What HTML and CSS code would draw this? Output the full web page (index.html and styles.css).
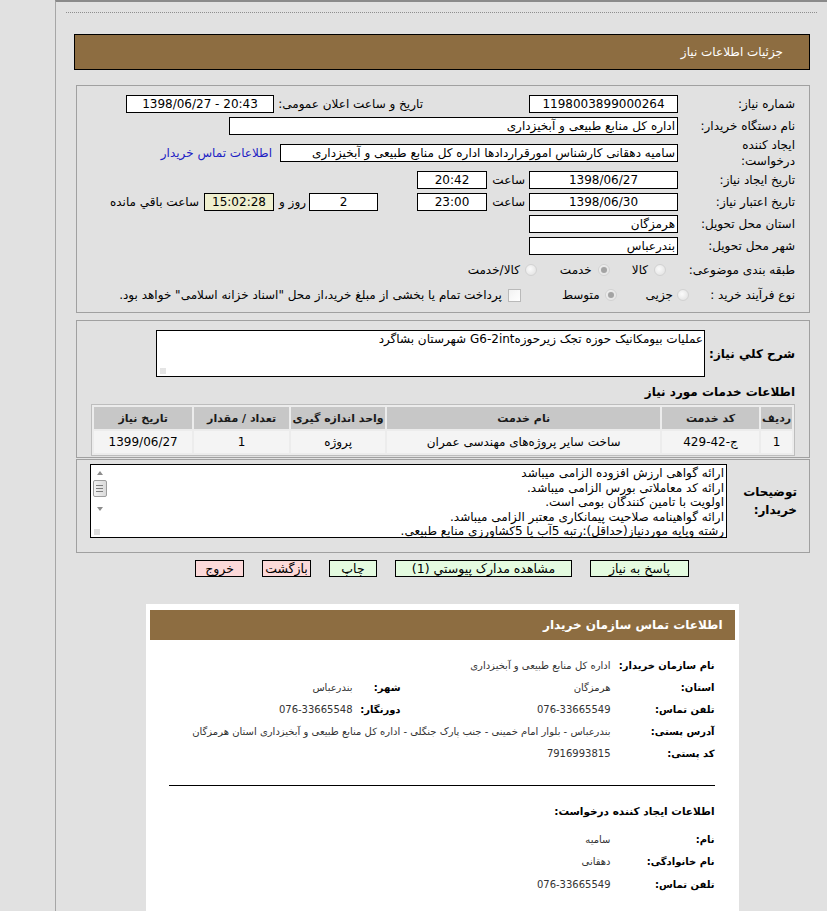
FILE: index.html
```html
<!DOCTYPE html>
<html lang="fa" dir="rtl">
<head>
<meta charset="utf-8">
<title>جزئیات اطلاعات نیاز</title>
<link rel="stylesheet" href="styles.css">
</head>
<body>
<div class="frame">
  <div class="dots"></div>
  <div class="content">
    <div class="title-bar">جزئیات اطلاعات نیاز</div>

    <div class="box form-box">
      <div class="row r1">
        <div class="lbl">شماره نیاز:</div>
        <div class="fld w149 c">1198003899000264</div>
        <div class="txt t-pub">تاریخ و ساعت اعلان عمومی:</div>
        <div class="fld w148 c m5 ltr">1398/06/27 - 20:43</div>
      </div>
      <div class="row">
        <div class="lbl">نام دستگاه خریدار:</div>
        <div class="fld w449">اداره کل منابع طبیعی و آبخیزداری</div>
      </div>
      <div class="row r3">
        <div class="lbl two">ایجاد کننده<br>درخواست:</div>
        <div class="fld w398">سامیه دهقانی کارشناس امورقراردادها اداره کل منابع طبیعی و آبخیزداری</div>
        <a class="link" href="#">اطلاعات تماس خریدار</a>
      </div>
      <div class="row">
        <div class="lbl">تاریخ ایجاد نیاز:</div>
        <div class="fld w149 c">1398/06/27</div>
        <div class="txt t-hr">ساعت</div>
        <div class="fld w70 c m5">20:42</div>
      </div>
      <div class="row">
        <div class="lbl">تاریخ اعتبار نیاز:</div>
        <div class="fld w149 c">1398/06/30</div>
        <div class="txt t-hr">ساعت</div>
        <div class="fld w70 c m5">23:00</div>
        <div class="fld w69 c m39">2</div>
        <div class="txt t-day">روز و</div>
        <div class="fld w70 c m4 remain">15:02:28</div>
        <div class="txt t-rem">ساعت باقي مانده</div>
      </div>
      <div class="row">
        <div class="lbl">استان محل تحویل:</div>
        <div class="fld w149">هرمزگان</div>
      </div>
      <div class="row">
        <div class="lbl">شهر محل تحویل:</div>
        <div class="fld w149">بندرعباس</div>
      </div>
      <div class="row r8">
        <div class="lbl">طبقه بندی موضوعی:</div>
        <span class="radio m12"></span>
        <span class="opt m6">کالا</span>
        <span class="radio on m22"></span>
        <span class="opt m6">خدمت</span>
        <span class="radio m23"></span>
        <span class="opt m5">کالا/خدمت</span>
      </div>
      <div class="row r9">
        <div class="lbl l106">نوع فرآیند خرید :</div>
        <span class="radio"></span>
        <span class="opt m4">جزیی</span>
        <span class="radio on m29"></span>
        <span class="opt m5">متوسط</span>
        <span class="check m41"></span>
        <span class="opt m6">پرداخت تمام یا بخشی از مبلغ خرید،از محل "اسناد خزانه اسلامی" خواهد بود.</span>
      </div>
    </div>

    <div class="box desc-box">
      <div class="desc-row">
        <div class="blbl">شرح کلي نیاز:</div>
        <div class="ta ta1">عملیات بیومکانیک حوزه تجک زیرحوزهG6-2int شهرستان بشاگرد<span class="grip"></span></div>
      </div>
      <div class="sub-h">اطلاعات خدمات مورد نیاز</div>
      <table class="svc">
        <thead>
          <tr>
            <th class="c1">ردیف</th>
            <th class="c2">کد خدمت</th>
            <th class="c3">نام خدمت</th>
            <th class="c4">واحد اندازه گیری</th>
            <th class="c5">تعداد / مقدار</th>
            <th class="c6">تاریخ نیاز</th>
          </tr>
        </thead>
        <tbody>
          <tr>
            <td>1</td>
            <td>ج-42-429</td>
            <td>ساخت سایر پروژه‌های مهندسی عمران</td>
            <td>پروژه</td>
            <td>1</td>
            <td>1399/06/27</td>
          </tr>
        </tbody>
      </table>
    </div>

    <div class="box note-box">
      <div class="blbl note-lbl">توضیحات<br>خریدار:</div>
      <div class="ta ta2">
        <div class="ta-text">
          <div>ارائه گواهی ارزش افزوده الزامی میباشد</div>
          <div>ارائه کد معاملاتی بورس الزامی میباشد.</div>
          <div>اولویت با تامین کنندگان بومی است.</div>
          <div>ارائه گواهینامه صلاحیت پیمانکاری معتبر الزامی میباشد.</div>
          <div>رشته وپایه موردنیاز(حداقل):رتبه 5آب یا 5کشاورزی منابع طبیعی.</div>
        </div>
        <div class="sbar">
          <span class="arr up"></span>
          <span class="thumb"><i></i><i></i><i></i></span>
          <span class="arr down"></span>
          <span class="grip2"></span>
        </div>
      </div>
    </div>

    <div class="buttons">
      <span class="btn green b1">پاسخ به نیاز</span>
      <span class="btn green b2">مشاهده مدارک پیوستي (1)</span>
      <span class="btn green b3">چاپ</span>
      <span class="btn pink b4">بازگشت</span>
      <span class="btn pink b5">خروج</span>
    </div>

    <div class="card">
      <div class="card-h">اطلاعات تماس سازمان خریدار</div>
      <div class="cgrid first">
        <div class="cl">نام سازمان خریدار:</div>
        <div class="cv span">اداره کل منابع طبیعی و آبخیزداری</div>
        <div class="cl">استان:</div>
        <div class="cv">هرمزگان</div>
        <div class="cl">شهر:</div>
        <div class="cv">بندرعباس</div>
        <div class="cl">تلفن تماس:</div>
        <div class="cv">076-33665549</div>
        <div class="cl">دورنگار:</div>
        <div class="cv">076-33665548</div>
        <div class="cl">آدرس پستی:</div>
        <div class="cv span">بندرعباس - بلوار امام خمینی - جنب پارک جنگلی - اداره کل منابع طبیعی و آبخیزداری استان هرمزگان</div>
        <div class="cl">کد پستی:</div>
        <div class="cv span">7916993815</div>
      </div>
      <hr class="sep">
      <div class="card-sub">اطلاعات ایجاد کننده درخواست:</div>
      <div class="cgrid second">
        <div class="cl">نام:</div>
        <div class="cv span">سامیه</div>
        <div class="cl">نام خانوادگی:</div>
        <div class="cv span">دهقانی</div>
        <div class="cl">تلفن تماس:</div>
        <div class="cv span">076-33665549</div>
      </div>
    </div>
  </div>
</div>
</body>
</html>
```
FILE: styles.css
```css
* { box-sizing: border-box; }
html, body { margin: 0; padding: 0; }
body {
  background: #e1e1e1;
  font-family: "DejaVu Sans", sans-serif;
  font-size: 12px;
  color: #000;
}
.frame {
  margin-left: 55px;
  border-left: 1px solid #a6a6a6;
  border-top: 2px solid #8a8a8a;
  min-height: 911px;
  overflow: hidden;
}
.dots {
  margin: 10px 10px 0 10px;
  border-top: 1px dotted #8e8e8e;
}
.content {
  padding: 0 17px 0 18px;
}
.title-bar {
  margin-top: 21px;
  height: 36px;
  border: 1px solid #000;
  background: #8d6d41;
  color: #fff;
  font-size: 12px;
  line-height: 34px;
  padding-right: 26px;
}
.box {
  border: 1px solid #a0a0a0;
  margin-left: 2px;
}
.form-box {
  margin-top: 15px;
  padding: 7px 14px 5px 8px;
}
.row {
  display: flex;
  align-items: center;
  height: 22px;
  white-space: nowrap;
}
.r3 { height: 32px; }
.r8 { height: 26px; }
.r9 { height: 24px; }
.lbl {
  width: 117px;
  flex: none;
  font-size: 12px;
}
.lbl.l106 { width: 106px; }
.lbl.two { line-height: 16px; }
.fld {
  flex: none;
  height: 18px;
  border: 1px solid #000;
  background: #fff;
  line-height: 16px;
  padding: 0 2px;
  overflow: hidden;
  white-space: nowrap;
}
.fld.c { text-align: center; }
.fld.ltr { direction: ltr; }
.w149 { width: 149px; }
.w148 { width: 148px; }
.w449 { width: 449px; }
.w398 { width: 398px; }
.w70 { width: 70px; }
.w69 { width: 69px; }
.m4 { margin-right: 4px; }
.m5 { margin-right: 5px; }
.m6 { margin-right: 6px; }
.m12 { margin-right: 12px; }
.m22 { margin-right: 22px; }
.m23 { margin-right: 23px; }
.m29 { margin-right: 29px; }
.m39 { margin-right: 39px; }
.m41 { margin-right: 41px; }
.remain { background: #efefcf; }
.txt { flex: none; white-space: nowrap; }
.t-pub { width: 144px; margin-right: 106px; }
.t-hr { width: 33px; margin-right: 4px; }
.t-day { width: 28px; margin-right: 3px; }
.t-rem { margin-right: 5px; }
.link {
  margin-right: 8px;
  color: #2121c4;
  text-decoration: none;
}
.radio {
  flex: none;
  position: relative;
  width: 12px;
  height: 12px;
  border-radius: 50%;
  border: 1px solid #d2d2d2;
  background: radial-gradient(circle at 40% 40%, #fbfbfb, #dedede);
}
.radio.on::after {
  content: "";
  position: absolute;
  left: 2px;
  top: 2px;
  width: 6px;
  height: 6px;
  border-radius: 50%;
  background: #a3a3a3;
  box-shadow: 0 0 0 1px #e6e6e6;
}
.check {
  flex: none;
  width: 13px;
  height: 13px;
  border: 1px solid #b9b9b9;
  background: linear-gradient(135deg, #f2f2f2, #ffffff);
}
.opt { flex: none; white-space: nowrap; }

/* description box */
.desc-box {
  margin-top: 7px;
  padding: 9px 14px 1px 14px;
}
.desc-row {
  display: flex;
  align-items: center;
}
.blbl {
  font-weight: bold;
  font-size: 12px;
  flex: none;
}
.desc-row .blbl { width: 90px; }
.ta {
  position: relative;
  border: 1px solid #000;
  background: #fff;
}
.ta1 {
  width: 549px;
  height: 47px;
  padding: 0 1px;
  line-height: 16px;
}
.grip {
  position: absolute;
  left: 3px;
  bottom: 2px;
  width: 6px;
  height: 6px;
  background: radial-gradient(circle, #c6c6c6 0.6px, transparent 0.8px) 0 0 / 2px 2px;
}
.sub-h {
  margin-top: 6px;
  font-weight: bold;
  font-size: 12px;
  line-height: 18px;
}
.svc {
  margin-top: 3px;
  width: 100%;
  border: 1px solid #bdbdbd;
  border-spacing: 2px;
  background: #ececec;
}
.svc th {
  background: #c7c7c7;
  height: 22px;
  font-size: 11px;
  font-weight: bold;
  color: #1a1a1a;
  padding: 0;
}
.svc td {
  background: #f4f4f4;
  height: 22px;
  text-align: center;
  font-size: 12px;
  padding: 0;
}
.svc .c1 { width: 31px; }
.svc .c2 { width: 98px; }
.svc .c3 { width: 278px; }
.svc .c4 { width: 96px; }
.svc .c5 { width: 96px; }
.svc .c6 { width: 99px; }

/* note box */
.note-box {
  margin-top: 1px;
  display: flex;
  align-items: center;
  padding: 4px 12px 14px 13px;
}
.note-lbl {
  width: 70px;
  line-height: 18px;
}
.ta2 {
  width: 637px;
  height: 74px;
  display: flex;
}
.ta-text {
  flex: 1;
  padding: 1px 2px 0 0;
  line-height: 14.5px;
  font-size: 12px;
  white-space: nowrap;
  overflow: hidden;
}
.sbar {
  position: relative;
  width: 17px;
  flex: none;
  display: flex;
  flex-direction: column;
  align-items: center;
  padding-top: 6px;
  background: #fff;
}
.arr {
  width: 0;
  height: 0;
  border-left: 3px solid transparent;
  border-right: 3px solid transparent;
}
.arr.up { border-bottom: 4px solid #8c8c8c; margin-bottom: 5px; }
.arr.down { border-top: 4px solid #8c8c8c; margin-top: 10px; }
.thumb {
  width: 14px;
  height: 17px;
  border: 1px solid #9e9e9e;
  border-radius: 2px;
  background: linear-gradient(90deg, #f2f2f2, #dadada);
  display: flex;
  flex-direction: column;
  align-items: center;
  justify-content: center;
  gap: 2px;
}
.thumb i {
  display: block;
  width: 7px;
  height: 1px;
  background: #7e7e7e;
}
.grip2 {
  position: absolute;
  left: 3px;
  bottom: 2px;
  width: 6px;
  height: 6px;
  background: radial-gradient(circle, #b9b9b9 0.6px, transparent 0.8px) 0 0 / 2px 2px;
}

/* buttons */
.buttons {
  margin-top: 7px;
  display: flex;
  justify-content: center;
  gap: 18px;
}
.btn {
  display: block;
  height: 17px;
  border: 1px solid #000;
  font-size: 12.5px;
  line-height: 15px;
  text-align: center;
  white-space: nowrap;
}
.green { background: #e4fbe0; }
.pink { background: #fcd9d9; }
.b1 { width: 99px; }
.b2 { width: 177px; }
.b3 { width: 48px; }
.b4 { width: 49px; }
.b5 { width: 49px; }

/* contact card */
.card {
  width: 593px;
  margin: 27px auto 0;
  background: #fff;
  padding: 6px 4px 30px 4px;
}
.card-h {
  height: 30px;
  background: #8d6d41;
  color: #fff;
  font-weight: bold;
  font-size: 12px;
  line-height: 30px;
  padding-right: 12px;
}
.cgrid {
  display: grid;
  grid-template-columns: 104px 210px 48px 1fr;
  grid-auto-rows: 22px;
  align-items: center;
  padding-right: 20px;
  padding-left: 10px;
}
.cgrid.first { margin-top: 14px; }
.cgrid.second { margin-top: 9px; grid-auto-rows: 22.5px; }
.cl {
  font-weight: bold;
  font-size: 10px;
  white-space: nowrap;
}
.cv {
  font-size: 10px;
  color: #333;
  white-space: nowrap;
}
.cv.span { grid-column: span 3; }
.sep {
  margin: 21px 20px 0 19px;
  border: 0;
  border-top: 1px solid #000;
  height: 0;
}
.card-sub {
  margin-top: 17px;
  padding-right: 20px;
  font-weight: bold;
  font-size: 10.5px;
  line-height: 16px;
}
```
